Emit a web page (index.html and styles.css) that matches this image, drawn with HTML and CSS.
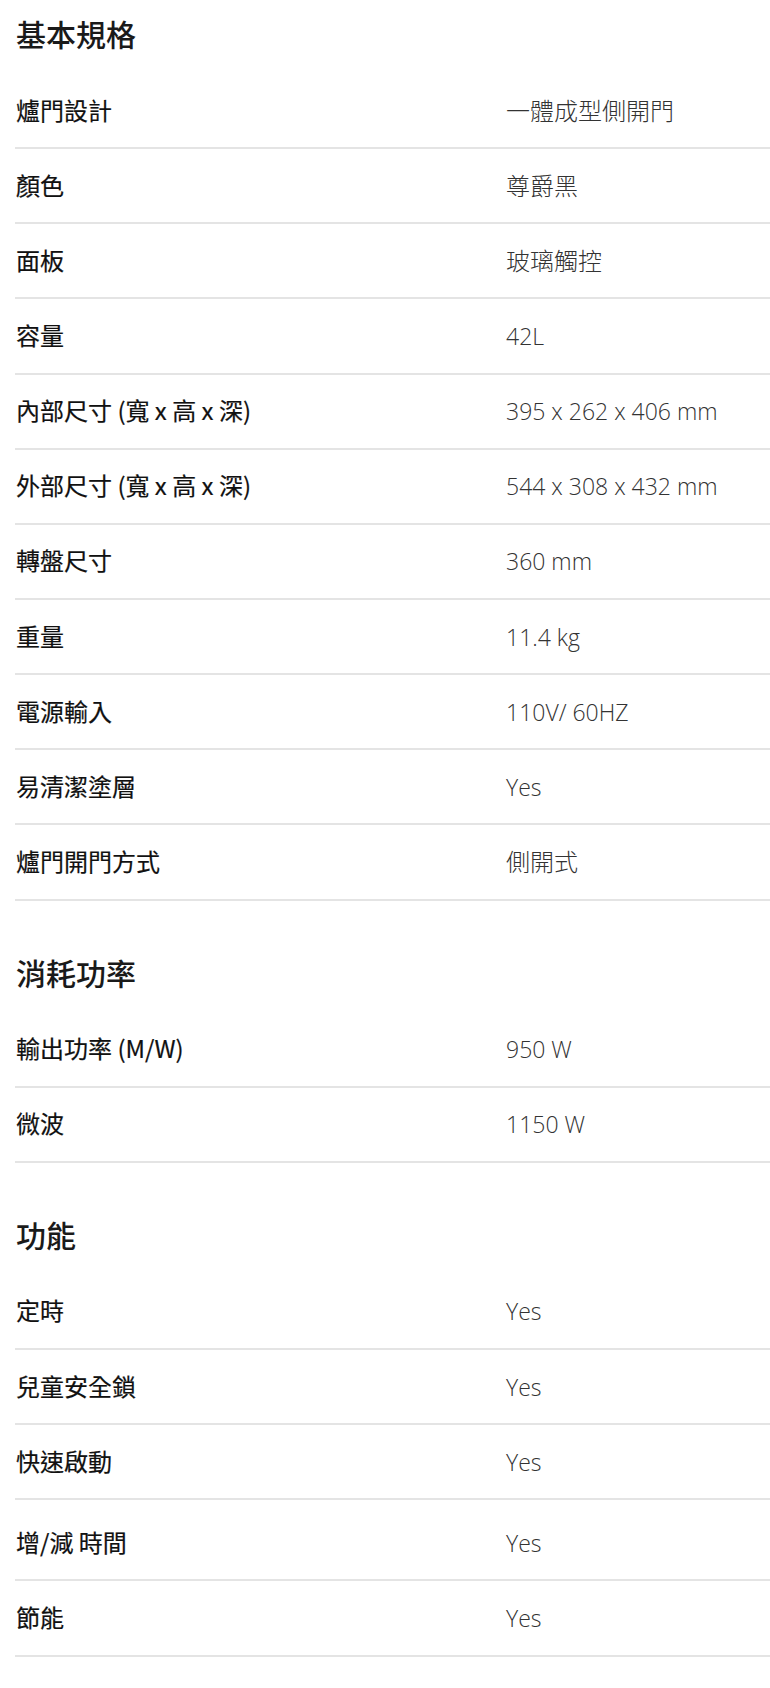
FILE: index.html
```html
<!DOCTYPE html>
<html lang="zh-Hant">
<head>
<meta charset="utf-8">
<title>規格</title>
<link rel="stylesheet" href="styles.css">
</head>
<body>
<div class="specs">
  <section class="spec-section">
    <h2 class="spec-title">基本規格</h2>
    <div class="spec-row"><div class="spec-label">爐門設計</div><div class="spec-value">一體成型側開門</div></div>
    <div class="spec-row"><div class="spec-label">顏色</div><div class="spec-value">尊爵黑</div></div>
    <div class="spec-row"><div class="spec-label">面板</div><div class="spec-value">玻璃觸控</div></div>
    <div class="spec-row"><div class="spec-label">容量</div><div class="spec-value spec-value--latin">42L</div></div>
    <div class="spec-row"><div class="spec-label">內部尺寸 (寬 x 高 x 深)</div><div class="spec-value spec-value--latin">395 x 262 x 406 mm</div></div>
    <div class="spec-row"><div class="spec-label">外部尺寸 (寬 x 高 x 深)</div><div class="spec-value spec-value--latin">544 x 308 x 432 mm</div></div>
    <div class="spec-row"><div class="spec-label">轉盤尺寸</div><div class="spec-value spec-value--latin">360 mm</div></div>
    <div class="spec-row"><div class="spec-label">重量</div><div class="spec-value spec-value--latin">11.4 kg</div></div>
    <div class="spec-row"><div class="spec-label">電源輸入</div><div class="spec-value spec-value--latin">110V/ 60HZ</div></div>
    <div class="spec-row"><div class="spec-label">易清潔塗層</div><div class="spec-value spec-value--latin">Yes</div></div>
    <div class="spec-row"><div class="spec-label">爐門開門方式</div><div class="spec-value">側開式</div></div>
  </section>
  <section class="spec-section">
    <h2 class="spec-title">消耗功率</h2>
    <div class="spec-row"><div class="spec-label">輸出功率 (M/W)</div><div class="spec-value spec-value--latin">950 W</div></div>
    <div class="spec-row"><div class="spec-label">微波</div><div class="spec-value spec-value--latin">1150 W</div></div>
  </section>
  <section class="spec-section">
    <h2 class="spec-title">功能</h2>
    <div class="spec-row"><div class="spec-label">定時</div><div class="spec-value spec-value--latin">Yes</div></div>
    <div class="spec-row"><div class="spec-label">兒童安全鎖</div><div class="spec-value spec-value--latin">Yes</div></div>
    <div class="spec-row"><div class="spec-label">快速啟動</div><div class="spec-value spec-value--latin">Yes</div></div>
    <div class="spec-row spec-row--tall"><div class="spec-label">增/減 時間</div><div class="spec-value spec-value--latin">Yes</div></div>
    <div class="spec-row"><div class="spec-label">節能</div><div class="spec-value spec-value--latin">Yes</div></div>
  </section>
</div>
</body>
</html>
```

FILE: styles.css
```css
html, body {
  margin: 0;
  padding: 0;
  background: #ffffff;
}

body {
  font-family: "Open Sans", "Noto Sans CJK TC", sans-serif;
  color: #222222;
}

.specs {
  display: flex;
  flex-direction: column;
  padding-left: 15px;
}

.spec-section + .spec-section {
  margin-top: 38px;
}

.spec-title {
  margin: 0;
  padding: 0 0 8px 1px;
  height: 66px;
  line-height: 66px;
  font-family: "Noto Sans CJK TC", sans-serif;
  font-size: 30px;
  font-weight: 500;
  color: #1a1a1a;
}

.spec-row {
  display: flex;
  align-items: center;
  height: 73.15px;
  border-bottom: 2px solid #e4e4e4;
}

.spec-row--tall {
  padding-top: 6px;
}

.spec-label {
  width: 491px;
  flex: none;
  padding: 0 0 2px 1px;
  box-sizing: border-box;
  font-family: "Noto Sans CJK TC", sans-serif;
  font-size: 24px;
  font-weight: 400;
  color: #111111;
  line-height: 30px;
  -webkit-text-stroke: 0.2px #111111;
}

.spec-value {
  font-family: "Open Sans", "Noto Sans CJK TC", sans-serif;
  font-size: 24px;
  font-weight: 300;
  color: #333333;
  line-height: 30px;
}

.spec-value--latin {
  font-size: 23px;
}
```
